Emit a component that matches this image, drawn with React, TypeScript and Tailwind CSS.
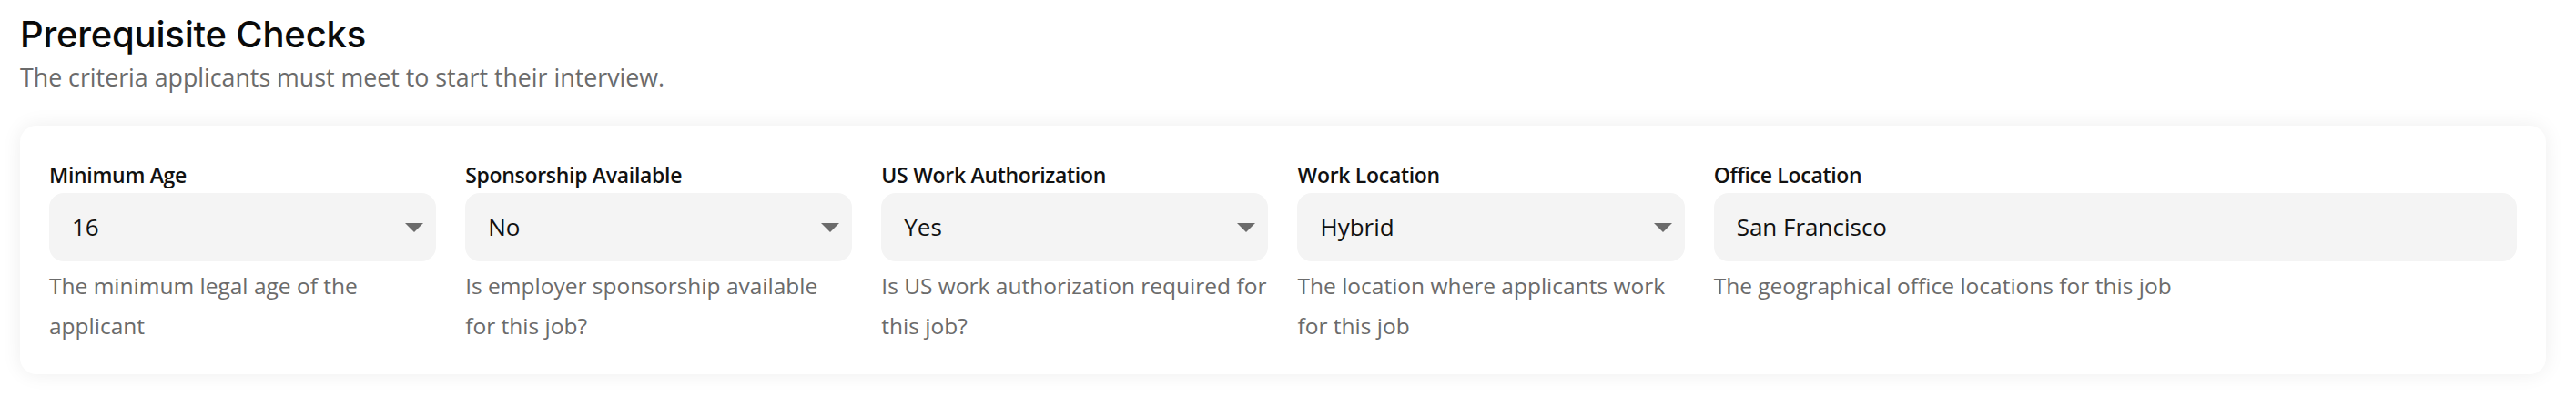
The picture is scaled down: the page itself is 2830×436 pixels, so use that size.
import React from 'react';

type Field = {
  label: string;
  value: string;
  help: string;
  select: boolean;
  wide?: boolean;
};

const fields: Field[] = [
  { label: 'Minimum Age', value: '16', help: 'The minimum legal age of the applicant', select: true },
  { label: 'Sponsorship Available', value: 'No', help: 'Is employer sponsorship available for this job?', select: true },
  { label: 'US Work Authorization', value: 'Yes', help: 'Is US work authorization required for this job?', select: true },
  { label: 'Work Location', value: 'Hybrid', help: 'The location where applicants work for this job', select: true },
  { label: 'Office Location', value: 'San Francisco', help: 'The geographical office locations for this job', select: false, wide: true },
];

const Caret: React.FC = () => (
  <svg width="20" height="10" viewBox="0 0 20 10" className="shrink-0">
    <polygon points="0,0 20,0 10,10" fill="#6b6b6b" />
  </svg>
);

const App: React.FC = () => {
  return (
    <div className="min-h-screen bg-white pl-[22px] pr-[33px] pt-[14px] font-['Open_Sans',sans-serif]">
      <h1 className="font-['Inter',sans-serif] text-[40px] leading-[48px] font-medium text-[#0a0a0a] tracking-[-0.2px]">
        Prerequisite Checks
      </h1>
      <p className="mt-[6px] text-[26.75px] leading-[34px] text-[#6b6b6b]">
        The criteria applicants must meet to start their interview.
      </p>

      <div className="mt-[36px] rounded-[18px] bg-white px-8 pt-[36px] pb-[31px] shadow-[0_0_22px_rgba(0,0,0,0.07)]">
        <div className="grid grid-cols-6 gap-x-8">
          {fields.map((field) => (
            <div key={field.label} className={field.wide ? 'col-span-2' : 'col-span-1'}>
              <label className="block text-[23px] leading-[36px] font-semibold text-[#111] tracking-[-0.3px]">
                {field.label}
              </label>
              <div className="mt-[2px] flex h-[75px] items-center justify-between rounded-2xl bg-[#f4f4f4] pl-[25px] pr-[14px]">
                <span className="text-[26px] text-[#111]">{field.value}</span>
                {field.select && <Caret />}
              </div>
              <p className="mt-[5px] text-[24.5px] leading-[44px] text-[#6b6b6b]">{field.help}</p>
            </div>
          ))}
        </div>
      </div>
    </div>
  );
};

export default App;
